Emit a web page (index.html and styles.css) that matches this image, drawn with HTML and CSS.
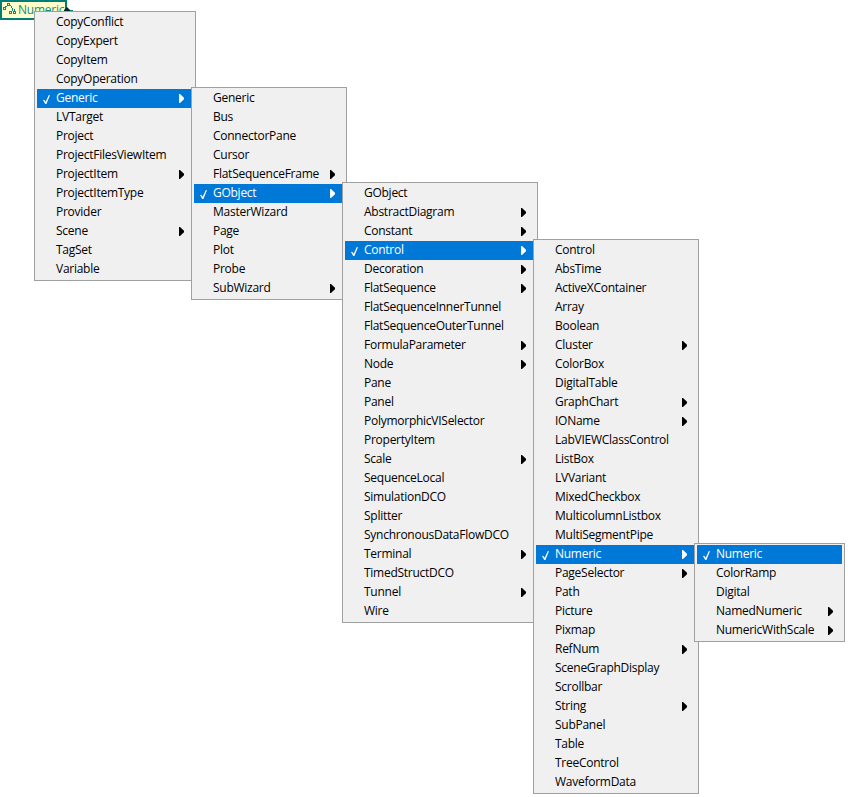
FILE: index.html
```html
<!DOCTYPE html>
<html lang="en">
<head>
<meta charset="utf-8">
<title>Class menu</title>
<link rel="stylesheet" href="styles.css">
</head>
<body>
<div class="node">
<svg class="node-icon" width="13" height="12" viewBox="0 0 13 12" fill="none" stroke="#178a80" shape-rendering="crispEdges"><rect x="0.5" y="4.5" width="2" height="2"/><rect x="4.5" y="0.5" width="2" height="2"/><rect x="6.5" y="8.5" width="2" height="2"/><rect x="10.5" y="8.5" width="2" height="2"/><path d="M2 3.5h2M7 2.5h1M8.5 3v2M9.5 5v3M11.5 6v2"/></svg>
<span class="node-label">Numeric</span>
<svg class="node-arrow" width="9" height="5" viewBox="0 0 9 5"><path d="M5 3H9V4H5Z" fill="#007d79"/><path d="M0 3L3 0L6 3V5H0Z" fill="#002b2a"/></svg>
</div>
<ul class="menu m1"><li>CopyConflict</li><li>CopyExpert</li><li>CopyItem</li><li>CopyOperation</li><li class="sub on">Generic</li><li>LVTarget</li><li>Project</li><li>ProjectFilesViewItem</li><li class="sub">ProjectItem</li><li>ProjectItemType</li><li>Provider</li><li class="sub">Scene</li><li>TagSet</li><li>Variable</li></ul>
<ul class="menu m2"><li>Generic</li><li>Bus</li><li>ConnectorPane</li><li>Cursor</li><li class="sub">FlatSequenceFrame</li><li class="sub on">GObject</li><li>MasterWizard</li><li>Page</li><li>Plot</li><li>Probe</li><li class="sub">SubWizard</li></ul>
<ul class="menu m3"><li>GObject</li><li class="sub">AbstractDiagram</li><li class="sub">Constant</li><li class="sub on">Control</li><li class="sub">Decoration</li><li class="sub">FlatSequence</li><li>FlatSequenceInnerTunnel</li><li>FlatSequenceOuterTunnel</li><li class="sub">FormulaParameter</li><li class="sub">Node</li><li>Pane</li><li>Panel</li><li>PolymorphicVISelector</li><li>PropertyItem</li><li class="sub">Scale</li><li>SequenceLocal</li><li>SimulationDCO</li><li>Splitter</li><li>SynchronousDataFlowDCO</li><li class="sub">Terminal</li><li>TimedStructDCO</li><li class="sub">Tunnel</li><li>Wire</li></ul>
<ul class="menu m4"><li>Control</li><li>AbsTime</li><li>ActiveXContainer</li><li>Array</li><li>Boolean</li><li class="sub">Cluster</li><li>ColorBox</li><li>DigitalTable</li><li class="sub">GraphChart</li><li class="sub">IOName</li><li>LabVIEWClassControl</li><li>ListBox</li><li>LVVariant</li><li>MixedCheckbox</li><li>MulticolumnListbox</li><li>MultiSegmentPipe</li><li class="sub on">Numeric</li><li class="sub">PageSelector</li><li>Path</li><li>Picture</li><li>Pixmap</li><li class="sub">RefNum</li><li>SceneGraphDisplay</li><li>Scrollbar</li><li class="sub">String</li><li>SubPanel</li><li>Table</li><li>TreeControl</li><li>WaveformData</li></ul>
<ul class="menu m5"><li class="on">Numeric</li><li>ColorRamp</li><li>Digital</li><li class="sub">NamedNumeric</li><li class="sub">NumericWithScale</li></ul>
</body>
</html>
```
FILE: styles.css
```css
body { margin: 0; width: 848px; height: 797px; position: relative; overflow: hidden; background: #fff; font-family: "Open Sans", sans-serif; font-size: 12px; }
.node { position: relative; box-sizing: border-box; width: 67px; height: 20px; border: 2px solid #007d79; background: #ffffcc; display: flex; color: #178a80; }
.node-icon { margin: 1px 2px 0 1px; flex: none; }
.node-label { line-height: 16px; letter-spacing: -0.25px; }
.node-arrow { position: absolute; left: 62px; top: 5px; }
.menu { position: absolute; box-sizing: border-box; margin: 0; padding: 1px 2px; list-style: none; border: 1px solid #a0a0a0; background: #f0f0f0; color: #000; letter-spacing: -0.26px; }
.menu li { position: relative; height: 19px; line-height: 18px; padding-left: 19px; white-space: nowrap; }
.m1 { left: 34px; top: 11px; width: 162px; }
.m2 { left: 191px; top: 87px; width: 156px; }
.m3 { left: 342px; top: 182px; width: 196px; }
.m4 { left: 533px; top: 239px; width: 166px; }
.m5 { left: 694px; top: 543px; width: 151px; }
.menu .on { background: #0078d7; color: #fff; }
.sub::after { content: ""; position: absolute; right: 9px; top: 5px; width: 5px; height: 9px; background: currentColor; clip-path: polygon(0 0, 20% 0, 100% 42%, 100% 58%, 20% 100%, 0 100%); }
.on::before { content: ""; position: absolute; left: 6px; top: 6px; width: 7px; height: 9px; background: #fff; clip-path: polygon(0 56%, 16% 54%, 38% 76%, 84% 0, 100% 2%, 48% 100%, 32% 100%); }
```
